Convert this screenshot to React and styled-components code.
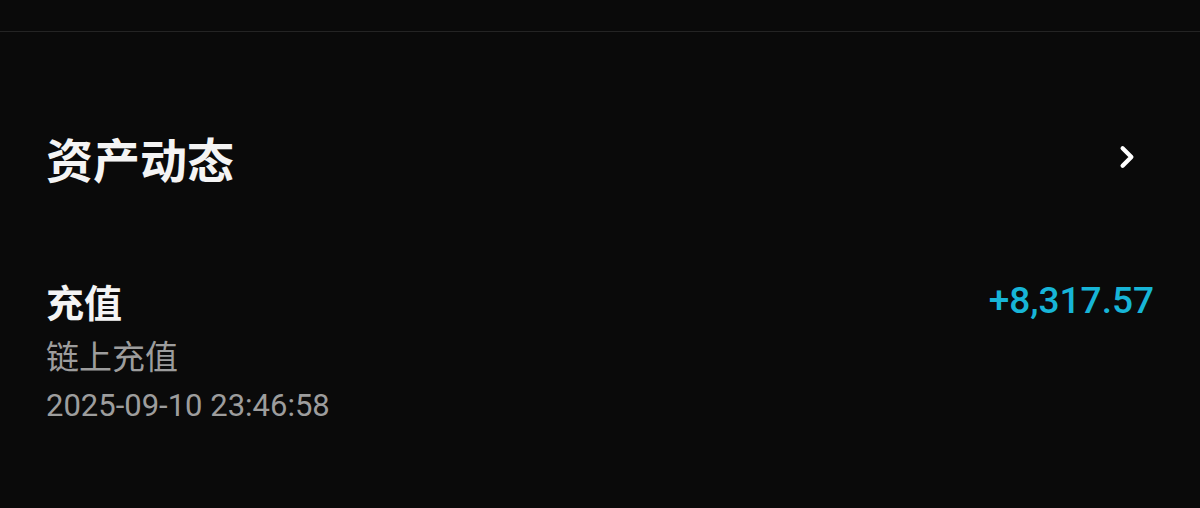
import React from "react";
import styled, { createGlobalStyle } from "styled-components";

const GlobalStyle = createGlobalStyle`
  html, body {
    margin: 0;
    padding: 0;
    background: #0a0a0a;
  }
  body {
    font-family: Roboto, "Noto Sans CJK SC", sans-serif;
  }
`;

const Page = styled.div`
  width: 1200px;
  height: 508px;
  background: #0a0a0a;
  overflow: hidden;
`;

const TopBar = styled.div`
  height: 31px;
  border-bottom: 1px solid #242424;
`;

const Section = styled.section`
  padding: 0 46px;
`;

const Header = styled.div`
  display: flex;
  align-items: center;
  justify-content: space-between;
  height: 64px;
  margin-top: 93px;
`;

const Title = styled.h2`
  margin: 0;
  font-family: "Noto Sans CJK SC", sans-serif;
  font-size: 47px;
  font-weight: 700;
  color: #f4f4f4;
`;

const Chevron = styled.svg`
  width: 30px;
  height: 30px;
  margin-right: 12px;
`;

const Record = styled.div`
  display: flex;
  justify-content: space-between;
  align-items: flex-start;
  margin-top: 85px;
`;

const Info = styled.div`
  display: flex;
  flex-direction: column;
`;

const RecordTitle = styled.div`
  font-family: "Noto Sans CJK SC", sans-serif;
  font-size: 38px;
  line-height: 54px;
  font-weight: 700;
  color: #f4f4f4;
`;

const SubText = styled.div`
  font-family: ${(p) => (p.$mono ? "Roboto, sans-serif" : "\"Noto Sans CJK SC\", sans-serif")};
  font-size: ${(p) => (p.$mono ? "31px" : "33px")};
  line-height: ${(p) => (p.$mono ? "48px" : "54px")};
  color: #9d9d9d;
`;

const Amount = styled.div`
  font-family: Roboto, sans-serif;
  font-size: 37px;
  line-height: 54px;
  font-weight: 500;
  color: #17b5d7;
`;

export default function App() {
  return (
    <Page>
      <GlobalStyle />
      <TopBar />
      <Section>
        <Header>
          <Title>资产动态</Title>
          <Chevron viewBox="0 0 24 24" fill="none">
            <path
              d="M8.5 5 L15.5 12 L8.5 19"
              stroke="#ffffff"
              strokeWidth="3.4"
              strokeLinecap="round"
              strokeLinejoin="round"
            />
          </Chevron>
        </Header>
        <Record>
          <Info>
            <RecordTitle>充值</RecordTitle>
            <SubText>链上充值</SubText>
            <SubText $mono>2025-09-10 23:46:58</SubText>
          </Info>
          <Amount>+8,317.57</Amount>
        </Record>
      </Section>
    </Page>
  );
}
